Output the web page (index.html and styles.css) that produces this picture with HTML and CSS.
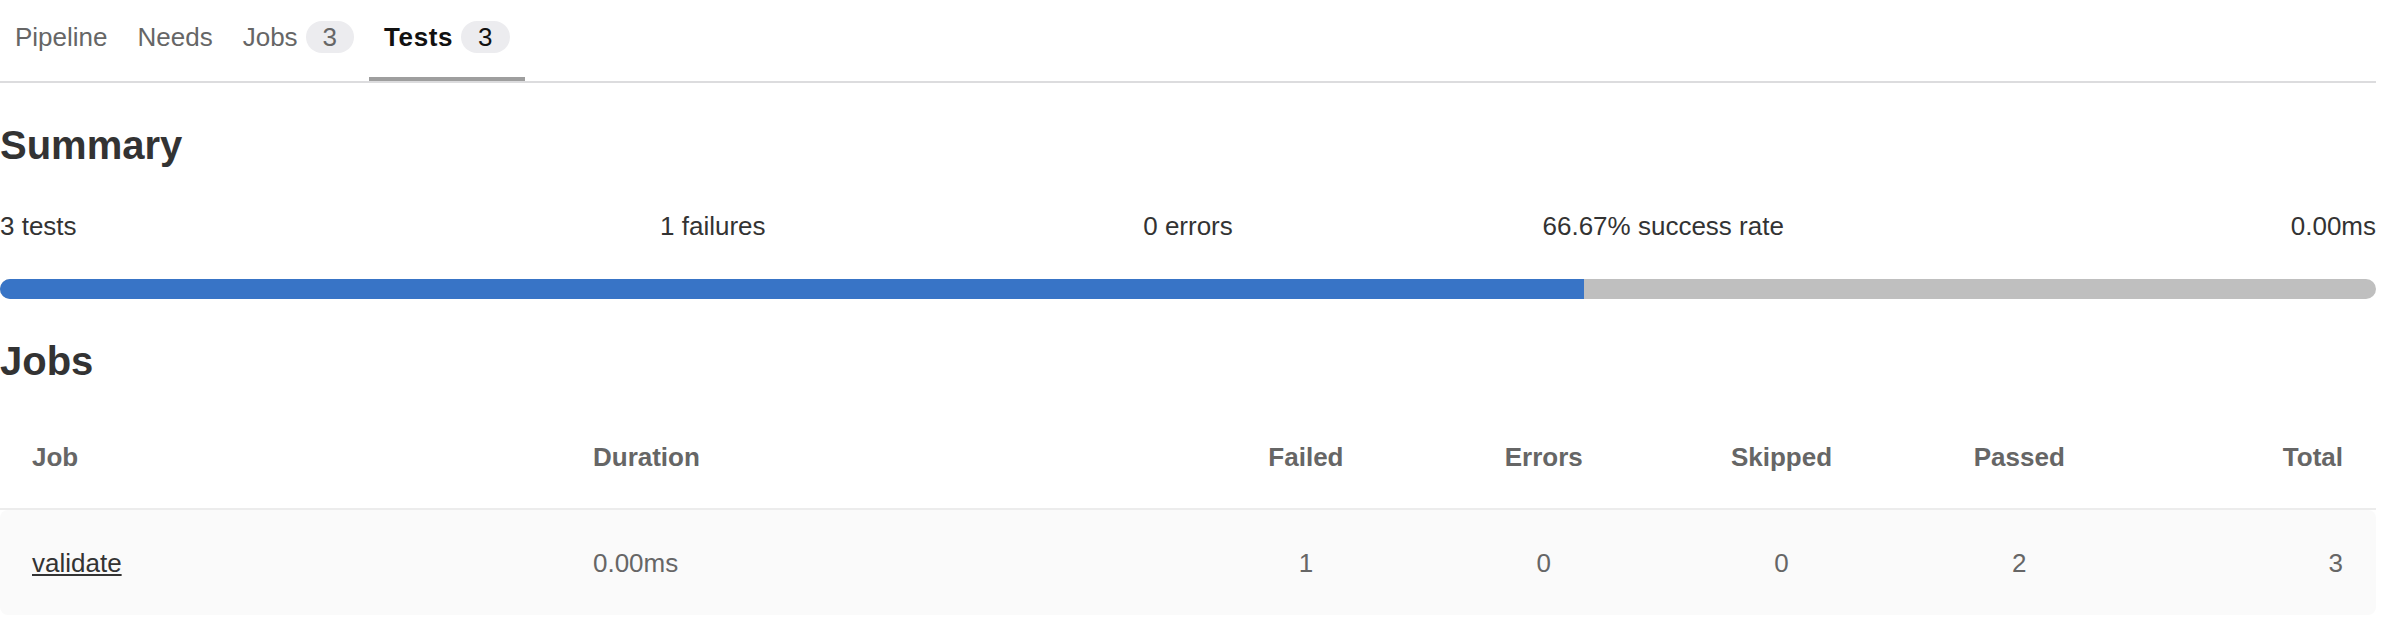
FILE: index.html
```html
<!DOCTYPE html>
<html lang="en">
<head>
<meta charset="utf-8">
<title>Pipeline tests</title>
<link rel="stylesheet" href="styles.css">
</head>
<body>
<div class="page">
  <nav class="tabs">
    <a class="tab" href="#">Pipeline</a>
    <a class="tab" href="#">Needs</a>
    <a class="tab" href="#">Jobs<span class="badge">3</span></a>
    <a class="tab active" href="#">Tests<span class="badge">3</span></a>
  </nav>

  <h2 class="heading summary-heading">Summary</h2>
  <div class="stats">
    <div class="stat first">3 tests</div>
    <div class="stat">1 failures</div>
    <div class="stat">0 errors</div>
    <div class="stat">66.67% success rate</div>
    <div class="stat last">0.00ms</div>
  </div>
  <div class="progress"><div class="progress-fill" style="width: 66.67%"></div></div>

  <h2 class="heading jobs-heading">Jobs</h2>
  <div class="table">
    <div class="row head">
      <div class="cell left">Job</div>
      <div class="cell left">Duration</div>
      <div class="cell center">Failed</div>
      <div class="cell center">Errors</div>
      <div class="cell center">Skipped</div>
      <div class="cell center">Passed</div>
      <div class="cell right">Total</div>
    </div>
    <div class="row body">
      <div class="cell left"><a class="job-link" href="#">validate</a></div>
      <div class="cell left muted">0.00ms</div>
      <div class="cell center muted">1</div>
      <div class="cell center muted">0</div>
      <div class="cell center muted">0</div>
      <div class="cell center muted">2</div>
      <div class="cell right muted">3</div>
    </div>
  </div>
</div>
</body>
</html>
```

FILE: styles.css
```css
html, body {
  margin: 0;
  padding: 0;
  background: #fff;
}

body {
  font-family: "Liberation Sans", Arial, Helvetica, sans-serif;
  font-size: 26px;
  line-height: 39px;
  color: #333;
}

.page {
  margin-right: 16px;
}

.tabs {
  display: flex;
  height: 81px;
  border-bottom: 2px solid #dcdcde;
}

.tab {
  display: flex;
  align-items: flex-start;
  padding: 18px 15px 0;
  color: #666;
  text-decoration: none;
  box-sizing: border-box;
  height: 81px;
}

.tab.active {
  color: #111;
  font-weight: bold;
  letter-spacing: 0.6px;
  border-bottom: 4px solid #9e9e9e;
}

.badge {
  display: inline-flex;
  align-items: center;
  justify-content: center;
  height: 32px;
  margin-top: 3px;
  margin-left: 8px;
  padding: 0 17px;
  border-radius: 16px;
  background: #ececef;
  color: #666;
  font-weight: normal;
  letter-spacing: 0;
}

.tab.active .badge {
  color: #111;
}

.heading {
  margin: 0;
  font-size: 40px;
  line-height: 48px;
  font-weight: bold;
  color: #333;
}

.summary-heading {
  margin-top: 38px;
}

.stats {
  display: grid;
  grid-template-columns: repeat(5, 1fr);
  margin-top: 38px;
  color: #333;
}

.stat {
  text-align: center;
}

.stat.first {
  text-align: left;
}

.stat.last {
  text-align: right;
}

.progress {
  margin-top: 33px;
  height: 20px;
  border-radius: 10px;
  background: #bfbfbf;
  overflow: hidden;
}

.progress-fill {
  height: 100%;
  background: #3874c6;
}

.jobs-heading {
  margin-top: 38px;
}

.row {
  display: grid;
  grid-template-columns: 23.61% 26.35% repeat(5, 1fr);
}

.row.head {
  padding: 53px 0 31px;
  font-weight: bold;
  color: #666;
  border-bottom: 2px solid #ececec;
}

.row.body {
  padding: 34px 0 32px;
  background: #fafafa;
  border-radius: 8px;
}

.cell.left {
  padding-left: 32px;
  text-align: left;
}

.cell.center {
  text-align: center;
}

.cell.right {
  padding-right: 33px;
  text-align: right;
}

.muted {
  color: #666;
}

.job-link {
  color: #333;
  text-decoration: underline;
}
```
